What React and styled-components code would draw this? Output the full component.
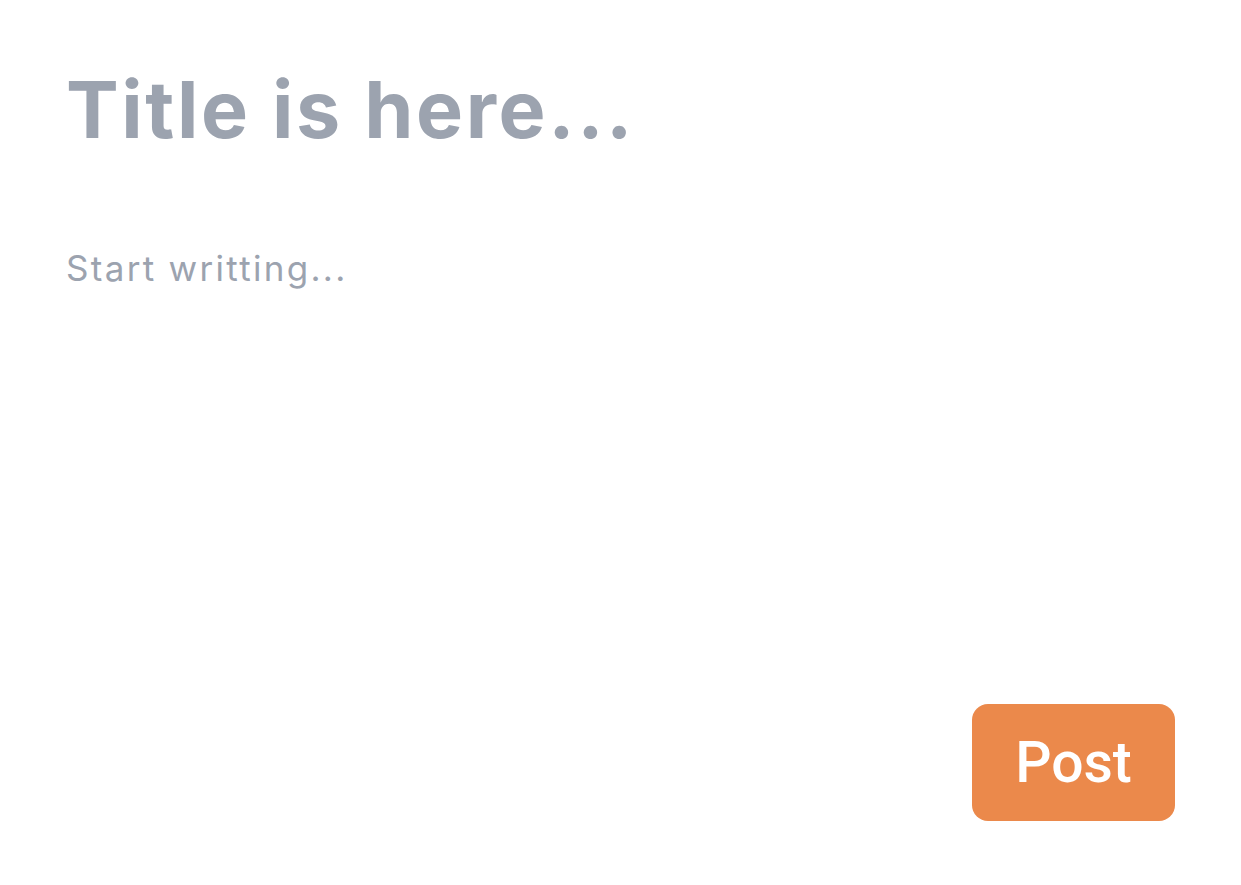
import React from 'react';
import styled, { createGlobalStyle } from 'styled-components';

const GlobalStyle = createGlobalStyle`
  html, body {
    margin: 0;
    padding: 0;
    background: #ffffff;
  }
  #root {
    min-height: 100vh;
  }
`;

const Page = styled.main`
  box-sizing: border-box;
  min-height: 100vh;
  padding: 64px 66px;
  display: flex;
  flex-direction: column;
  font-family: Inter, "Open Sans", sans-serif;
  font-variant-ligatures: none;
`;

const Title = styled.h1`
  margin: 0;
  padding-top: 6px;
  font-size: 79px;
  line-height: 1;
  font-weight: 700;
  letter-spacing: 2.6px;
  color: #9ca3af;
`;

const Body = styled.p`
  flex: 1;
  margin: 0;
  margin-top: 102px;
  font-size: 35px;
  line-height: 1;
  font-weight: 400;
  letter-spacing: 2.3px;
  color: #9ca3af;
`;

const Footer = styled.div`
  display: flex;
  justify-content: flex-end;
`;

const PostButton = styled.button`
  width: 203px;
  height: 117px;
  border: 0;
  border-radius: 16px;
  background: #eb894b;
  color: #ffffff;
  font-family: Roboto, "Liberation Sans", sans-serif;
  font-size: 57px;
  font-weight: 500;
  cursor: pointer;
`;

const App = () => (
  <>
    <GlobalStyle />
    <Page>
      <Title>Title is here...</Title>
      <Body>Start writting...</Body>
      <Footer>
        <PostButton type="button">Post</PostButton>
      </Footer>
    </Page>
  </>
);

export default App;
